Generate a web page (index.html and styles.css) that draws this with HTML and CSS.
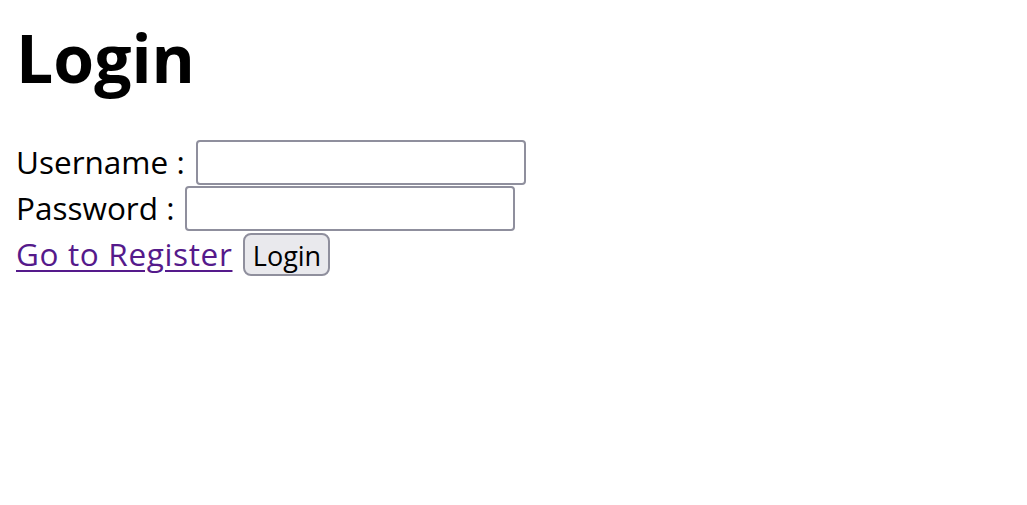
FILE: index.html
```html
<!DOCTYPE html>
<html>
<head>
<meta charset="utf-8">
<title>Login</title>
<link rel="stylesheet" href="styles.css">
</head>
<body>
<h1 class="title">Login</h1>
<form class="form">
  <div class="row"><span>Username :</span><input class="field" type="text"></div>
  <div class="row"><span>Password :</span><input class="field" type="password"></div>
  <div class="row"><a class="link" href="#">Go to Register</a><button class="btn" type="button">Login</button></div>
</form>
</body>
</html>
```
FILE: styles.css
```css
body {
  margin: 0;
  padding: 0 16px;
  font-family: "Open Sans", "Noto Sans", sans-serif;
  color: #000;
  background: #fff;
}
.title {
  margin: 0;
  padding-top: 12px;
  font-size: 66px;
  font-weight: 700;
  line-height: 90px;
}
.form {
  margin-top: 37px;
  font-size: 31.5px;
  display: flex;
  flex-direction: column;
}
.row {
  height: 46px;
  line-height: 46px;
  display: flex;
  align-items: center;
  gap: 11px;
  white-space: nowrap;
}
.field {
  box-sizing: border-box;
  width: 330px;
  height: 45px;
  border: 2px solid #8f8f9d;
  border-radius: 4px;
  margin: 0;
  padding: 0;
  background: #fff;
}
.link {
  color: #551a8b;
  text-decoration: underline;
  text-decoration-thickness: 2px;
  text-underline-offset: 4px;
  letter-spacing: 0.65px;
}
.btn {
  box-sizing: border-box;
  width: 87px;
  height: 43px;
  border: 2px solid #8f8f9d;
  border-radius: 8px;
  background: #e9e9ed;
  font-family: "Open Sans", "Noto Sans", sans-serif;
  font-size: 27px;
  line-height: 1;
  color: #000;
  padding: 2px 0 0;
  margin: 0;
}
```
